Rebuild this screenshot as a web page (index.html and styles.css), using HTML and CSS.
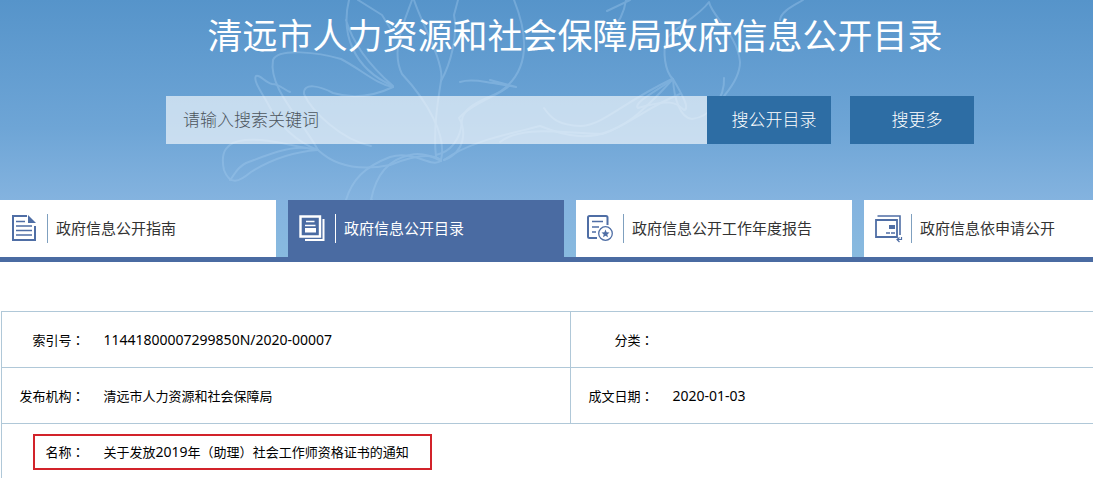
FILE: index.html
```html
<!DOCTYPE html>
<html lang="zh-CN">
<head>
    <meta charset="utf-8">
    <title>清远市人力资源和社会保障局政府信息公开目录</title>
    <link rel="stylesheet" href="styles.css">
</head>
<body>
    <header class="banner">
        <!-- Flower line drawing behind the header -->
        <svg class="flower" width="660" height="257" viewBox="200 0 660 257" aria-hidden="true">
            <g class="petals">
                <path d="M318 150C296 142 278 124 268 104C260 90 253 80 256 76C260 74 264 82 272 84C280 84 284 90 290 92"></path>
                <path d="M318 150C302 120 268 88 273 60C278 48 318 52 341 59C362 70 376 84 393 87"></path>
                <path d="M393 87C370 98 350 98 333 93C320 86 303 82 304 94C312 112 342 140 371 146"></path>
                <path d="M349 0C341 32 352 68 393 86C370 66 353 44 346 20"></path>
                <path d="M318 150C290 152 270 160 251 172C239 182 230 186 224 170C220 152 226 142 245 140C268 138 290 146 318 150"></path>
                <path d="M306 148C286 146 260 158 246 163C236 168 234 176 230 180"></path>
                <path d="M318 150C335 166 360 171 390 165C410 157 430 152 441 160C447 136 428 102 402 74C390 50 405 20 412 0"></path>
                <path d="M346 200C352 180 364 167 390 157C415 150 430 168 441 161"></path>
                <path d="M371 200C376 174 390 159 410 155C420 152 432 156 441 161"></path>
                <path d="M436 157C433 130 438 100 441 81C445 63 420 20 414 0"></path>
                <path d="M441 81C451 63 458 35 454 15L458 0"></path>
                <path d="M436 155C450 152 461 140 462 120C464 105 485 100 501 91C522 76 534 50 514 0"></path>
                <path d="M444 160C466 152 466 130 459 118C472 103 500 95 509 86"></path>
                <path d="M460 82C472 78 484 82 493 83L516 87L490 80"></path>
                <path d="M444 160C470 141 510 134 540 126C570 138 590 139 610 131C635 120 650 106 680 94"></path>
                <path d="M500 142C522 125 560 133 602 134C625 126 638 117 673 79"></path>
                <path d="M544 108C552 120 560 125 580 126C602 126 620 104 672 79"></path>
                <path d="M673 79C665 72 662 51 667 38C676 27 698 17 709 2C711 15 738 35 740 62C740 78 728 91 724 96"></path>
                <path d="M673 79C674 98 680 118 692 119C710 117 725 98 724 78"></path>
                <path d="M673 79C683 96 690 109 684 110C676 102 670 99 638 108C632 103 660 89 673 79"></path>
                <path d="M607 11L630 0M626 0C624 14 618 24 610 32M780 20C781 11 795 5 803 0"></path>
                <path d="M346 200L340 216M372 200L370 218M358 0L382 15L390 28"></path>
            </g>
        </svg>

        <div class="container">
            <h1 class="title">清远市人力资源和社会保障局政府信息公开目录</h1>

            <form class="search">
                <input class="search-input" type="text" aria-label="搜索关键词" placeholder="请输入搜索关键词">
                <button class="search-btn" type="submit">搜公开目录</button>
                <button class="search-btn more" type="button">搜更多</button>
            </form>

            <nav class="tabs">
                <a class="tab" href="#">
                    <svg class="icon" width="28" height="28" viewBox="0 0 28 28">
                        <path d="M16 1H2V25H24V11" fill="none" stroke="currentColor" stroke-width="2"></path>
                        <path d="M17 0L25 8H17Z" fill="currentColor"></path>
                        <path d="M5 6.500H14M5 11H21M5 15.500H21M5 20H21" fill="none" stroke="currentColor" stroke-width="1.500"></path>
                    </svg>
                    <span class="tab-text">政府信息公开指南</span>
                </a>
                <a class="tab active" href="#">
                    <svg class="icon" width="28" height="28" viewBox="0 0 28 28">
                        <path d="M1.500 1.500H21V21.500H1.500Z" fill="none" stroke="currentColor" stroke-width="2.400"></path>
                        <path d="M24.500 4V25H6" fill="none" stroke="currentColor" stroke-width="2"></path>
                        <path d="M7 6.500H15.500M6 10.500H16.500" fill="none" stroke="currentColor" stroke-width="1.600"></path>
                        <path d="M6 13H17V17.500H6Z" fill="currentColor"></path>
                    </svg>
                    <span class="tab-text">政府信息公开目录</span>
                </a>
                <a class="tab" href="#">
                    <svg class="icon" width="28" height="28" viewBox="0 0 28 28">
                        <path d="M10 23H2.500Q1 23 1 21.500V2.500Q1 1 2.500 1H19Q20.500 1 20.500 2.500V10" fill="none" stroke="currentColor" stroke-width="2"></path>
                        <path d="M5 6.500H16M5 12H12M5 17H9" fill="none" stroke="currentColor" stroke-width="1.600"></path>
                        <circle cx="18.500" cy="18.500" r="6.800" fill="none" stroke="currentColor" stroke-width="1.300"></circle>
                        <path d="M18.500 14.500L19.600 17.300L22.500 17.500L20.300 19.400L21 22.200L18.500 20.700L16 22.200L16.700 19.400L14.500 17.500L17.400 17.300Z" fill="currentColor"></path>
                    </svg>
                    <span class="tab-text">政府信息公开工作年度报告</span>
                </a>
                <a class="tab" href="#">
                    <svg class="icon" width="28" height="28" viewBox="0 0 28 28">
                        <path d="M2.500 1H25V20" fill="none" stroke="currentColor" stroke-width="1.600"></path>
                        <path d="M1 5H22V22H1Z" fill="none" stroke="currentColor" stroke-width="1.800"></path>
                        <path d="M14 10H20V14H14Z" fill="currentColor"></path>
                        <path d="M11 18H15M16 18H20" stroke="currentColor" stroke-width="1.400"></path>
                        <path d="M26.500 22V24.500H22M24.500 22.500L22 24.500L24.500 27" fill="none" stroke="currentColor" stroke-width="1.200"></path>
                    </svg>
                    <span class="tab-text">政府信息依申请公开</span>
                </a>
            </nav>
        </div>
    </header>

    <main class="container content">
        <table class="info">
            <colgroup>
                <col class="col-label"><col><col class="col-label"><col>
            </colgroup>
            <tr>
                <th scope="row">索引号<span class="mark" lang="zh-Hant">：</span></th>
                <td class="number">11441800007299850N/2020-00007</td>
                <th scope="row">分类<span class="mark" lang="zh-Hant">：</span></th>
                <td></td>
            </tr>
            <tr>
                <th scope="row">发布机构<span class="mark" lang="zh-Hant">：</span></th>
                <td>清远市人力资源和社会保障局</td>
                <th scope="row">成文日期<span class="mark" lang="zh-Hant">：</span></th>
                <td class="number">2020-01-03</td>
            </tr>
            <tr>
                <th scope="row" class="marked">名称<span class="mark" lang="zh-Hant">：</span></th>
                <td colspan="3">关于发放<span class="number">2019</span>年<span class="mark" lang="zh-Hant">（</span>助理<span class="mark" lang="zh-Hant">）</span>社会工作师资格证书的通知</td>
            </tr>
        </table>
    </main>
</body>
</html>
```
FILE: styles.css
```css
body {
    margin: 0;
    overflow: hidden;
    background-color: #fff;
    color: #000;
    font-family: "Noto Sans", "Noto Sans CJK SC", sans-serif;
    font-size: 13px;
}
.container {
    box-sizing: border-box;
    min-width: 1140px;
    max-width: 1140px;
    margin: 0 auto;
    position: relative;
}

/* Header */
.banner {
    position: relative;
    background: linear-gradient(#5694ca, #6ea5d6 50%, #84b3df 78%, #88badf);
    border-bottom: 5px solid #4a6ba2;
}
.flower {
    position: absolute;
    top: 0;
    left: 200px;
}
.petals {
    fill: none;
    stroke: #a5cdf0;
    stroke-width: 2;
    stroke-linecap: round;
    stroke-linejoin: round;
    opacity: 0.36;
}
.title {
    margin: 0;
    padding: 10px 0 34px 10px;
    color: #fff;
    font-size: 35px;
    font-weight: 400;
    line-height: 52px;
    text-align: center;
}

/* Search */
.search {
    display: flex;
    justify-content: center;
    height: 48px;
    margin-bottom: 56px;
}
.search-input {
    box-sizing: border-box;
    width: 541px;
    padding: 0 17px 4px;
    border: 0;
    border-radius: 0;
    outline: 0;
    background-color: rgba(255, 255, 255, 0.62);
    color: #555;
    font-family: "Noto Sans CJK SC", sans-serif;
    font-size: 17px;
    font-weight: 300;
}
.search-input::placeholder {
    color: #4c555d;
}
.search-btn {
    width: 124px;
    padding: 0 0 4px 10px;
    border: 0;
    background-color: #2d6da4;
    color: #fff;
    font-family: "Noto Sans CJK SC", sans-serif;
    font-size: 17px;
    font-weight: 300;
    cursor: pointer;
}
.more {
    margin-left: 19px;
}

/* Tabs */
.tabs {
    display: grid;
    grid-template-columns: repeat(4, 1fr);
    gap: 12px;
}
.tab {
    display: flex;
    align-items: center;
    height: 57px;
    padding-left: 11px;
    background-color: #fff;
    color: #4f6ea5;
    font-size: 15px;
    text-decoration: none;
}
.icon {
    flex: none;
}
.tab-text {
    margin-left: 8px;
    padding-left: 8px;
    border-left: 1px solid #7fa0bf;
    color: #333;
    line-height: 29px;
}
.active {
    background-color: #4a6ba2;
    color: #fff;
}
.active .tab-text {
    border-color: #fff;
    color: #fff;
}

/* Info table */
.content {
    padding: 49px 0 0 1px;
}
.info {
    width: 100%;
    border-collapse: collapse;
    table-layout: fixed;
    border: 1px solid #b0c8d8;
}
.col-label {
    width: 102px;
}
.info tr {
    height: 56px;
    border-bottom: 1px solid #b0c8d8;
}
.info th {
    padding: 0 19px 0 0;
    border-left: 1px solid #b0c8d8;
    font-weight: 400;
    text-align: right;
    white-space: nowrap;
}
.info td {
    padding: 0;
}
.info .number {
    font-size: 14px;
}
.mark {
    font-family: "Noto Sans CJK TC", sans-serif;
}
.marked {
    position: relative;
}
/* Red frame round the document name */
.marked::after {
    content: "";
    position: absolute;
    top: 10px;
    left: 31px;
    width: 395px;
    height: 32px;
    border: 2px solid #d2232a;
}
```
